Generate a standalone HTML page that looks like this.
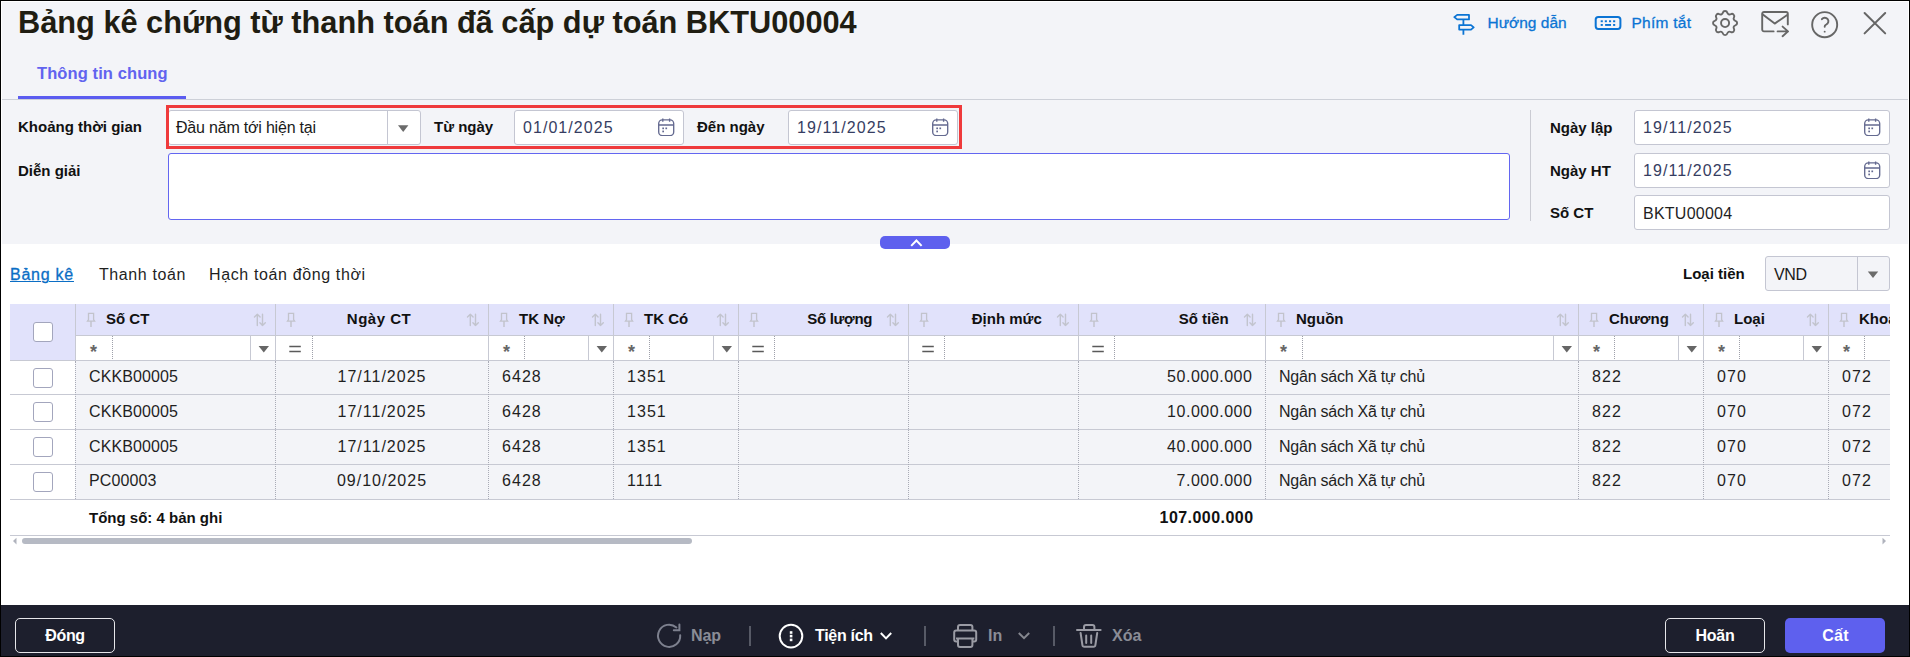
<!DOCTYPE html>
<html><head><meta charset="utf-8"><title>Bảng kê</title><style>
html,body{margin:0;padding:0;width:1910px;height:657px;overflow:hidden;background:#000}
#root{position:absolute;left:0;top:0;width:1910px;height:657px;background:#000;overflow:hidden;font-family:"Liberation Sans", sans-serif}
.a{position:absolute}
.t{position:absolute;white-space:nowrap;font-family:"Liberation Sans", sans-serif;line-height:1}
</style></head><body><div id="root">
<div class="a" style="left:1px;top:1px;width:1908px;height:655px;background:#fff"></div>
<div class="a" style="left:2px;top:2px;width:1906px;height:242px;background:#f3f4f8"></div>
<div class="t" style="left:18px;top:5.91px;font-size:32px;font-weight:bold;color:#1f1d12;transform:scaleX(0.9605);transform-origin:0 0">Bảng kê chứng từ thanh toán đã cấp dự toán BKTU00004</div>
<svg class="a" style="left:1450px;top:10px" width="28" height="28" viewBox="1450 10 28 28" fill="none" stroke="#0b74d4" stroke-width="1.8" stroke-linejoin="round">
<path d="M1457.2 14.9 H1469 V19.4 H1457.2 L1454.3 17.15 Z"/>
<path d="M1459.2 25.1 H1471 L1473.7 27.35 L1471 29.6 H1459.2 Z"/>
<path d="M1463.4 19.4 V25.1 M1463.4 29.6 V34.8"/>
</svg>
<div class="t" style="left:1487.5px;top:15.48px;font-size:15.5px;color:#0b74d4;-webkit-text-stroke:0.3px #0b74d4">Hướng dẫn</div>
<svg class="a" style="left:1590px;top:12px" width="36" height="22" viewBox="1590 12 36 22" fill="none" stroke="#0b74d4" stroke-width="2">
<rect x="1595.7" y="16.9" width="24.7" height="12" rx="2.6"/>
<g fill="#0b74d4" stroke="none">
<rect x="1600.7" y="20.3" width="2.1" height="1.9"/><rect x="1604.8" y="20.3" width="2.1" height="1.9"/><rect x="1609" y="20.3" width="2.1" height="1.9"/><rect x="1613.1" y="20.3" width="2.1" height="1.9"/>
<rect x="1600.7" y="24" width="2.1" height="1.9"/><rect x="1605.1" y="24" width="5.9" height="1.9"/><rect x="1613.1" y="24" width="2.1" height="1.9"/>
</g></svg>
<div class="t" style="left:1631.5px;top:15.48px;font-size:15.5px;letter-spacing:0.25px;color:#0b74d4;-webkit-text-stroke:0.3px #0b74d4">Phím tắt</div>
<svg class="a" style="left:1708.9px;top:7.1px" width="32.16" height="32.16" viewBox="0 0 24 24" fill="none" stroke="#666" stroke-width="1.42" stroke-linecap="round" stroke-linejoin="round">
<path d="M10.325 4.317c.426 -1.756 2.924 -1.756 3.35 0a1.724 1.724 0 0 0 2.573 1.066c1.543 -.94 3.31 .826 2.37 2.37a1.724 1.724 0 0 0 1.065 2.572c1.756 .426 1.756 2.924 0 3.35a1.724 1.724 0 0 0 -1.066 2.573c.94 1.543 -.826 3.31 -2.37 2.37a1.724 1.724 0 0 0 -2.572 1.065c-.426 1.756 -2.924 1.756 -3.35 0a1.724 1.724 0 0 0 -2.573 -1.066c-1.543 .94 -3.31 -.826 -2.37 -2.37a1.724 1.724 0 0 0 -1.065 -2.572c-1.756 -.426 -1.756 -2.924 0 -3.35a1.724 1.724 0 0 0 1.066 -2.573c-.94 -1.543 .826 -3.31 2.37 -2.37c1 .608 2.296 .07 2.572 -1.065z"/>
<path d="M9 12a3 3 0 1 0 6 0a3 3 0 0 0 -6 0"/></svg>
<svg class="a" style="left:1756px;top:6px" width="38" height="36" viewBox="1756 6 38 36" fill="none" stroke="#666" stroke-width="1.9" stroke-linecap="round" stroke-linejoin="round">
<path d="M1773.6 31.4 H1764 a1.8 1.8 0 0 1 -1.8 -1.8 V13.8 a1.8 1.8 0 0 1 1.8 -1.8 H1786 a1.8 1.8 0 0 1 1.8 1.8 V24.4"/>
<path d="M1762.8 14.4 L1774.7 23.6 L1787.2 15"/>
<path d="M1777.6 31.4 H1788 M1782.6 26.6 L1788 31.4 L1782.6 36.2"/>
</svg>
<svg class="a" style="left:1808.1px;top:7.7px" width="33.36" height="33.36" viewBox="0 0 24 24" fill="none" stroke="#666" stroke-width="1.37" stroke-linecap="round" stroke-linejoin="round">
<path d="M3 12a9 9 0 1 0 18 0a9 9 0 1 0 -18 0"/><path d="M12 17l0 .01"/><path d="M12 13.5a1.5 1.5 0 0 1 1 -1.5a2.6 2.6 0 1 0 -3 -4"/></svg>
<svg class="a" style="left:1860px;top:8px" width="30" height="30" viewBox="1860 8 30 30" fill="none" stroke="#666" stroke-width="2" stroke-linecap="round">
<path d="M1864.6 13 L1885.2 33.4 M1885.2 13 L1864.6 33.4"/></svg>
<div class="t" style="left:37px;top:65.03px;font-size:16.5px;font-weight:bold;letter-spacing:0.1px;color:#6163ef;">Thông tin chung</div>
<div class="a" style="left:18px;top:96px;width:168px;height:3px;background:#5b5cf0"></div>
<div class="a" style="left:2px;top:99px;width:1906px;height:1px;background:#cdd0d8"></div>
<div class="t" style="left:18px;top:119.30px;font-size:15px;font-weight:bold;color:#111;">Khoảng thời gian</div>
<div class="t" style="left:18px;top:163.30px;font-size:15px;font-weight:bold;color:#111;">Diễn giải</div>
<div class="a" style="left:168px;top:110px;width:251px;height:33px;background:#fff;border:1px solid #c4c6d2;border-radius:3px"></div>
<div class="a" style="left:387px;top:111px;width:1px;height:33px;background:#c4c6d2"></div>
<svg class="a" style="left:396px;top:124px" width="14" height="10" viewBox="0 0 14 10"><path d="M2 1.2 H12.4 L7.2 7.9 Z" fill="#6b6b6b"/></svg>
<div class="t" style="left:176px;top:120.46px;font-size:16px;letter-spacing:-0.2px;color:#1a1a1a;">Đầu năm tới hiện tại</div>
<div class="a" style="left:166px;top:105px;width:790px;height:38px;border:3px solid #ef3a3c"></div>
<div class="t" style="left:434px;top:119.30px;font-size:15px;font-weight:bold;color:#111;">Từ ngày</div>
<div class="a" style="left:514px;top:110px;width:168px;height:33px;background:#fff;border:1px solid #c4c6d2;border-radius:3px"></div>
<div class="t" style="left:523px;top:120.46px;font-size:16px;letter-spacing:1.05px;color:#363d62;">01/01/2025</div>
<svg class="a" style="left:656px;top:116px" width="20" height="20" viewBox="0 0 20 20" fill="none" stroke="#646a90" stroke-width="1.35">
<rect x="2.7" y="3.8" width="15" height="15.8" rx="3.6"/><path d="M2.7 9 H17.7 M6.8 2.6 V5.8 M13.6 2.6 V5.8"/>
<g fill="#646a90" stroke="none"><rect x="6.3" y="11.5" width="1.7" height="1.7"/><rect x="9.4" y="11.5" width="1.7" height="1.7"/><rect x="6.3" y="14.6" width="1.7" height="1.7"/></g></svg>
<div class="t" style="left:697px;top:119.30px;font-size:15px;font-weight:bold;color:#111;">Đến ngày</div>
<div class="a" style="left:788px;top:110px;width:168px;height:33px;background:#fff;border:1px solid #c4c6d2;border-radius:3px"></div>
<div class="t" style="left:797px;top:120.46px;font-size:16px;letter-spacing:1.08px;color:#363d62;">19/11/2025</div>
<svg class="a" style="left:930px;top:116px" width="20" height="20" viewBox="0 0 20 20" fill="none" stroke="#646a90" stroke-width="1.35">
<rect x="2.7" y="3.8" width="15" height="15.8" rx="3.6"/><path d="M2.7 9 H17.7 M6.8 2.6 V5.8 M13.6 2.6 V5.8"/>
<g fill="#646a90" stroke="none"><rect x="6.3" y="11.5" width="1.7" height="1.7"/><rect x="9.4" y="11.5" width="1.7" height="1.7"/><rect x="6.3" y="14.6" width="1.7" height="1.7"/></g></svg>
<div class="a" style="left:168px;top:153px;width:1340px;height:65px;background:#fff;border:1px solid #6366f1;border-radius:3px"></div>
<div class="a" style="left:1530px;top:110px;width:1px;height:111px;background:#cacbd3"></div>
<div class="t" style="left:1550px;top:120.30px;font-size:15px;font-weight:bold;color:#111;">Ngày lập</div>
<div class="a" style="left:1634px;top:110px;width:254px;height:33px;background:#fff;border:1px solid #c4c6d2;border-radius:3px"></div>
<div class="t" style="left:1643px;top:120.46px;font-size:16px;letter-spacing:1.08px;color:#363d62;">19/11/2025</div>
<svg class="a" style="left:1862px;top:116px" width="20" height="20" viewBox="0 0 20 20" fill="none" stroke="#646a90" stroke-width="1.35">
<rect x="2.7" y="3.8" width="15" height="15.8" rx="3.6"/><path d="M2.7 9 H17.7 M6.8 2.6 V5.8 M13.6 2.6 V5.8"/>
<g fill="#646a90" stroke="none"><rect x="6.3" y="11.5" width="1.7" height="1.7"/><rect x="9.4" y="11.5" width="1.7" height="1.7"/><rect x="6.3" y="14.6" width="1.7" height="1.7"/></g></svg>
<div class="t" style="left:1550px;top:163.30px;font-size:15px;font-weight:bold;color:#111;">Ngày HT</div>
<div class="a" style="left:1634px;top:153px;width:254px;height:33px;background:#fff;border:1px solid #c4c6d2;border-radius:3px"></div>
<div class="t" style="left:1643px;top:163.46px;font-size:16px;letter-spacing:1.08px;color:#363d62;">19/11/2025</div>
<svg class="a" style="left:1862px;top:159px" width="20" height="20" viewBox="0 0 20 20" fill="none" stroke="#646a90" stroke-width="1.35">
<rect x="2.7" y="3.8" width="15" height="15.8" rx="3.6"/><path d="M2.7 9 H17.7 M6.8 2.6 V5.8 M13.6 2.6 V5.8"/>
<g fill="#646a90" stroke="none"><rect x="6.3" y="11.5" width="1.7" height="1.7"/><rect x="9.4" y="11.5" width="1.7" height="1.7"/><rect x="6.3" y="14.6" width="1.7" height="1.7"/></g></svg>
<div class="t" style="left:1550px;top:205.30px;font-size:15px;font-weight:bold;color:#111;">Số CT</div>
<div class="a" style="left:1634px;top:195px;width:254px;height:33px;background:#fff;border:1px solid #c4c6d2;border-radius:3px"></div>
<div class="t" style="left:1643px;top:205.66px;font-size:16px;letter-spacing:0.25px;color:#1f1f1f;">BKTU00004</div>
<div class="a" style="left:880px;top:236px;width:70px;height:13px;background:#5e60ee;border-radius:5px"></div>
<svg class="a" style="left:905px;top:235px" width="22" height="14" viewBox="905 235 22 14"><path d="M911.2 245.9 L916.4 240.5 L921.6 245.9" fill="none" stroke="#fff" stroke-width="2"/></svg>
<div class="t" style="left:10px;top:266.96px;font-size:16px;letter-spacing:0.75px;color:#0b6ec5;text-decoration:underline;text-underline-offset:1px;text-decoration-thickness:1.4px;-webkit-text-stroke:0.3px #0b6ec5">Bảng kê</div>
<div class="t" style="left:99px;top:266.96px;font-size:16px;letter-spacing:0.6px;color:#1f1f1f;">Thanh toán</div>
<div class="t" style="left:209px;top:266.96px;font-size:16px;letter-spacing:0.63px;color:#1f1f1f;">Hạch toán đồng thời</div>
<div class="t" style="left:1683px;top:266.30px;font-size:15px;font-weight:bold;color:#111;">Loại tiền</div>
<div class="a" style="left:1765px;top:256px;width:123px;height:33px;background:#f3f4f8;border:1px solid #c4c6d2;border-radius:3px"></div>
<div class="a" style="left:1857px;top:257px;width:1px;height:33px;background:#c4c6d2"></div>
<svg class="a" style="left:1866px;top:270px" width="14" height="10" viewBox="0 0 14 10"><path d="M1.8 1.4 H12.2 L7 8 Z" fill="#6b6b6b"/></svg>
<div class="t" style="left:1774px;top:266.76px;font-size:16px;letter-spacing:-0.4px;color:#1a1a1a;">VND</div>
<div class="a" style="left:10px;top:304px;width:1880px;height:232px;overflow:hidden">
<div class="a" style="left:0px;top:0px;width:1880px;height:31px;background:#e1e2fb"></div>
<div class="a" style="left:0px;top:31px;width:65px;height:25px;background:#e1e2fb"></div>
<div class="a" style="left:65px;top:31px;width:1815px;height:25px;background:#fff"></div>
<div class="a" style="left:65px;top:31px;width:1815px;height:1px;background:#c7c9d3"></div>
<div class="a" style="left:0px;top:56px;width:1880px;height:1px;background:#c7c9d3"></div>
<div class="a" style="left:65px;top:57px;width:1815px;height:33px;background:#f3f4f8"></div>
<div class="a" style="left:65px;top:91px;width:1815px;height:34px;background:#f3f4f8"></div>
<div class="a" style="left:65px;top:126px;width:1815px;height:34px;background:#f3f4f8"></div>
<div class="a" style="left:65px;top:161px;width:1815px;height:34px;background:#f3f4f8"></div>
<div class="a" style="left:0px;top:90px;width:1880px;height:1px;background:#c7c9d3"></div>
<div class="a" style="left:0px;top:125px;width:1880px;height:1px;background:#c7c9d3"></div>
<div class="a" style="left:0px;top:160px;width:1880px;height:1px;background:#c7c9d3"></div>
<div class="a" style="left:0px;top:195px;width:1880px;height:1px;background:#c7c9d3"></div>
<div class="a" style="left:0px;top:231px;width:1880px;height:1px;background:#c7c9d3"></div>
<div class="a" style="left:23px;top:18px;width:20px;height:20px;background:#fff;border:1px solid #a3a6bd;border-radius:3px;box-sizing:border-box"></div>
<div class="a" style="left:23px;top:64px;width:20px;height:20px;background:#fff;border:1px solid #a3a6bd;border-radius:3px;box-sizing:border-box"></div>
<div class="a" style="left:23px;top:98px;width:20px;height:20px;background:#fff;border:1px solid #a3a6bd;border-radius:3px;box-sizing:border-box"></div>
<div class="a" style="left:23px;top:133px;width:20px;height:20px;background:#fff;border:1px solid #a3a6bd;border-radius:3px;box-sizing:border-box"></div>
<div class="a" style="left:23px;top:168px;width:20px;height:20px;background:#fff;border:1px solid #a3a6bd;border-radius:3px;box-sizing:border-box"></div>
<div class="a" style="left:65px;top:0px;width:1px;height:56px;background:#c7c9d3"></div>
<svg class="a" style="left:75px;top:8px" width="12" height="16" viewBox="0 0 12 16" fill="none" stroke="#c2c3cc" stroke-width="1.3"><path d="M3.5 1.4 H8.6 V7.6 L9.6 9.1 H2.5 L3.5 7.6 Z"/><path d="M6 9.1 V14.9" stroke-width="1.5"/></svg>
<div class="t" style="left:96px;top:7.30px;font-size:15px;font-weight:bold;color:#111;">Số CT</div>
<svg class="a" style="left:243px;top:9px" width="14" height="14" viewBox="0 0 14 14" fill="none" stroke="#c2c4ce" stroke-width="1.4" stroke-linecap="round" stroke-linejoin="round"><path d="M4.3 1.2 V12.6 M1.5 4 L4.3 1.2 L7.1 4"/><path d="M9.5 1.2 V12.6 M6.9 9.8 L9.5 12.6 L12.3 9.8"/></svg>
<div class="t" style="left:80px;top:38.5px;font-size:18px;font-weight:bold;color:#666">*</div>
<div class="a" style="left:102px;top:32px;width:1px;height:23px;border-left:1px dotted #9ea0aa;box-sizing:border-box"></div>
<div class="a" style="left:240px;top:32px;width:1px;height:24px;background:#c7c9d3"></div>
<svg class="a" style="left:248px;top:41px" width="12" height="9" viewBox="0 0 12 9"><path d="M0.6 1 H11 L5.8 7.6 Z" fill="#666"/></svg>
<div class="a" style="left:65px;top:57px;width:1px;height:138px;border-left:1px dotted #a9abb6;box-sizing:border-box"></div>
<div class="a" style="left:265px;top:0px;width:1px;height:56px;background:#c7c9d3"></div>
<svg class="a" style="left:275px;top:8px" width="12" height="16" viewBox="0 0 12 16" fill="none" stroke="#c2c3cc" stroke-width="1.3"><path d="M3.5 1.4 H8.6 V7.6 L9.6 9.1 H2.5 L3.5 7.6 Z"/><path d="M6 9.1 V14.9" stroke-width="1.5"/></svg>
<div class="t" style="left:69.0px;width:600px;text-align:center;top:7.30px;font-size:15px;font-weight:bold;letter-spacing:0.5px;color:#111;">Ngày CT</div>
<svg class="a" style="left:456px;top:9px" width="14" height="14" viewBox="0 0 14 14" fill="none" stroke="#c2c4ce" stroke-width="1.4" stroke-linecap="round" stroke-linejoin="round"><path d="M4.3 1.2 V12.6 M1.5 4 L4.3 1.2 L7.1 4"/><path d="M9.5 1.2 V12.6 M6.9 9.8 L9.5 12.6 L12.3 9.8"/></svg>
<svg class="a" style="left:279px;top:41px" width="14" height="9" viewBox="0 0 14 9"><path d="M0.3 1.6 H11.8 M0.3 6.6 H11.8" stroke="#5a5a5a" stroke-width="1.5"/></svg>
<div class="a" style="left:302px;top:32px;width:1px;height:23px;border-left:1px dotted #9ea0aa;box-sizing:border-box"></div>
<div class="a" style="left:265px;top:57px;width:1px;height:138px;border-left:1px dotted #a9abb6;box-sizing:border-box"></div>
<div class="a" style="left:478px;top:0px;width:1px;height:56px;background:#c7c9d3"></div>
<svg class="a" style="left:488px;top:8px" width="12" height="16" viewBox="0 0 12 16" fill="none" stroke="#c2c3cc" stroke-width="1.3"><path d="M3.5 1.4 H8.6 V7.6 L9.6 9.1 H2.5 L3.5 7.6 Z"/><path d="M6 9.1 V14.9" stroke-width="1.5"/></svg>
<div class="t" style="left:509px;top:7.30px;font-size:15px;font-weight:bold;color:#111;">TK Nợ</div>
<svg class="a" style="left:581px;top:9px" width="14" height="14" viewBox="0 0 14 14" fill="none" stroke="#c2c4ce" stroke-width="1.4" stroke-linecap="round" stroke-linejoin="round"><path d="M4.3 1.2 V12.6 M1.5 4 L4.3 1.2 L7.1 4"/><path d="M9.5 1.2 V12.6 M6.9 9.8 L9.5 12.6 L12.3 9.8"/></svg>
<div class="t" style="left:493px;top:38.5px;font-size:18px;font-weight:bold;color:#666">*</div>
<div class="a" style="left:514px;top:32px;width:1px;height:23px;border-left:1px dotted #9ea0aa;box-sizing:border-box"></div>
<div class="a" style="left:578px;top:32px;width:1px;height:24px;background:#c7c9d3"></div>
<svg class="a" style="left:586px;top:41px" width="12" height="9" viewBox="0 0 12 9"><path d="M0.6 1 H11 L5.8 7.6 Z" fill="#666"/></svg>
<div class="a" style="left:478px;top:57px;width:1px;height:138px;border-left:1px dotted #a9abb6;box-sizing:border-box"></div>
<div class="a" style="left:603px;top:0px;width:1px;height:56px;background:#c7c9d3"></div>
<svg class="a" style="left:613px;top:8px" width="12" height="16" viewBox="0 0 12 16" fill="none" stroke="#c2c3cc" stroke-width="1.3"><path d="M3.5 1.4 H8.6 V7.6 L9.6 9.1 H2.5 L3.5 7.6 Z"/><path d="M6 9.1 V14.9" stroke-width="1.5"/></svg>
<div class="t" style="left:634px;top:7.30px;font-size:15px;font-weight:bold;color:#111;">TK Có</div>
<svg class="a" style="left:706px;top:9px" width="14" height="14" viewBox="0 0 14 14" fill="none" stroke="#c2c4ce" stroke-width="1.4" stroke-linecap="round" stroke-linejoin="round"><path d="M4.3 1.2 V12.6 M1.5 4 L4.3 1.2 L7.1 4"/><path d="M9.5 1.2 V12.6 M6.9 9.8 L9.5 12.6 L12.3 9.8"/></svg>
<div class="t" style="left:618px;top:38.5px;font-size:18px;font-weight:bold;color:#666">*</div>
<div class="a" style="left:639px;top:32px;width:1px;height:23px;border-left:1px dotted #9ea0aa;box-sizing:border-box"></div>
<div class="a" style="left:703px;top:32px;width:1px;height:24px;background:#c7c9d3"></div>
<svg class="a" style="left:711px;top:41px" width="12" height="9" viewBox="0 0 12 9"><path d="M0.6 1 H11 L5.8 7.6 Z" fill="#666"/></svg>
<div class="a" style="left:603px;top:57px;width:1px;height:138px;border-left:1px dotted #a9abb6;box-sizing:border-box"></div>
<div class="a" style="left:728px;top:0px;width:1px;height:56px;background:#c7c9d3"></div>
<svg class="a" style="left:738px;top:8px" width="12" height="16" viewBox="0 0 12 16" fill="none" stroke="#c2c3cc" stroke-width="1.3"><path d="M3.5 1.4 H8.6 V7.6 L9.6 9.1 H2.5 L3.5 7.6 Z"/><path d="M6 9.1 V14.9" stroke-width="1.5"/></svg>
<div class="t" style="left:262.20000000000005px;width:600px;text-align:right;top:7.30px;font-size:15px;font-weight:bold;letter-spacing:-0.3px;color:#111;">Số lượng</div>
<svg class="a" style="left:876px;top:9px" width="14" height="14" viewBox="0 0 14 14" fill="none" stroke="#c2c4ce" stroke-width="1.4" stroke-linecap="round" stroke-linejoin="round"><path d="M4.3 1.2 V12.6 M1.5 4 L4.3 1.2 L7.1 4"/><path d="M9.5 1.2 V12.6 M6.9 9.8 L9.5 12.6 L12.3 9.8"/></svg>
<svg class="a" style="left:742px;top:41px" width="14" height="9" viewBox="0 0 14 9"><path d="M0.3 1.6 H11.8 M0.3 6.6 H11.8" stroke="#5a5a5a" stroke-width="1.5"/></svg>
<div class="a" style="left:764px;top:32px;width:1px;height:23px;border-left:1px dotted #9ea0aa;box-sizing:border-box"></div>
<div class="a" style="left:728px;top:57px;width:1px;height:138px;border-left:1px dotted #a9abb6;box-sizing:border-box"></div>
<div class="a" style="left:898px;top:0px;width:1px;height:56px;background:#c7c9d3"></div>
<svg class="a" style="left:908px;top:8px" width="12" height="16" viewBox="0 0 12 16" fill="none" stroke="#c2c3cc" stroke-width="1.3"><path d="M3.5 1.4 H8.6 V7.6 L9.6 9.1 H2.5 L3.5 7.6 Z"/><path d="M6 9.1 V14.9" stroke-width="1.5"/></svg>
<div class="t" style="left:431.79999999999995px;width:600px;text-align:right;top:7.30px;font-size:15px;font-weight:bold;color:#111;">Định mức</div>
<svg class="a" style="left:1046px;top:9px" width="14" height="14" viewBox="0 0 14 14" fill="none" stroke="#c2c4ce" stroke-width="1.4" stroke-linecap="round" stroke-linejoin="round"><path d="M4.3 1.2 V12.6 M1.5 4 L4.3 1.2 L7.1 4"/><path d="M9.5 1.2 V12.6 M6.9 9.8 L9.5 12.6 L12.3 9.8"/></svg>
<svg class="a" style="left:912px;top:41px" width="14" height="9" viewBox="0 0 14 9"><path d="M0.3 1.6 H11.8 M0.3 6.6 H11.8" stroke="#5a5a5a" stroke-width="1.5"/></svg>
<div class="a" style="left:934px;top:32px;width:1px;height:23px;border-left:1px dotted #9ea0aa;box-sizing:border-box"></div>
<div class="a" style="left:898px;top:57px;width:1px;height:138px;border-left:1px dotted #a9abb6;box-sizing:border-box"></div>
<div class="a" style="left:1068px;top:0px;width:1px;height:56px;background:#c7c9d3"></div>
<svg class="a" style="left:1078px;top:8px" width="12" height="16" viewBox="0 0 12 16" fill="none" stroke="#c2c3cc" stroke-width="1.3"><path d="M3.5 1.4 H8.6 V7.6 L9.6 9.1 H2.5 L3.5 7.6 Z"/><path d="M6 9.1 V14.9" stroke-width="1.5"/></svg>
<div class="t" style="left:618.8px;width:600px;text-align:right;top:7.30px;font-size:15px;font-weight:bold;color:#111;">Số tiền</div>
<svg class="a" style="left:1233px;top:9px" width="14" height="14" viewBox="0 0 14 14" fill="none" stroke="#c2c4ce" stroke-width="1.4" stroke-linecap="round" stroke-linejoin="round"><path d="M4.3 1.2 V12.6 M1.5 4 L4.3 1.2 L7.1 4"/><path d="M9.5 1.2 V12.6 M6.9 9.8 L9.5 12.6 L12.3 9.8"/></svg>
<svg class="a" style="left:1082px;top:41px" width="14" height="9" viewBox="0 0 14 9"><path d="M0.3 1.6 H11.8 M0.3 6.6 H11.8" stroke="#5a5a5a" stroke-width="1.5"/></svg>
<div class="a" style="left:1104px;top:32px;width:1px;height:23px;border-left:1px dotted #9ea0aa;box-sizing:border-box"></div>
<div class="a" style="left:1068px;top:57px;width:1px;height:138px;border-left:1px dotted #a9abb6;box-sizing:border-box"></div>
<div class="a" style="left:1255px;top:0px;width:1px;height:56px;background:#c7c9d3"></div>
<svg class="a" style="left:1265px;top:8px" width="12" height="16" viewBox="0 0 12 16" fill="none" stroke="#c2c3cc" stroke-width="1.3"><path d="M3.5 1.4 H8.6 V7.6 L9.6 9.1 H2.5 L3.5 7.6 Z"/><path d="M6 9.1 V14.9" stroke-width="1.5"/></svg>
<div class="t" style="left:1286px;top:7.30px;font-size:15px;font-weight:bold;color:#111;">Nguồn</div>
<svg class="a" style="left:1546px;top:9px" width="14" height="14" viewBox="0 0 14 14" fill="none" stroke="#c2c4ce" stroke-width="1.4" stroke-linecap="round" stroke-linejoin="round"><path d="M4.3 1.2 V12.6 M1.5 4 L4.3 1.2 L7.1 4"/><path d="M9.5 1.2 V12.6 M6.9 9.8 L9.5 12.6 L12.3 9.8"/></svg>
<div class="t" style="left:1270px;top:38.5px;font-size:18px;font-weight:bold;color:#666">*</div>
<div class="a" style="left:1292px;top:32px;width:1px;height:23px;border-left:1px dotted #9ea0aa;box-sizing:border-box"></div>
<div class="a" style="left:1543px;top:32px;width:1px;height:24px;background:#c7c9d3"></div>
<svg class="a" style="left:1551px;top:41px" width="12" height="9" viewBox="0 0 12 9"><path d="M0.6 1 H11 L5.8 7.6 Z" fill="#666"/></svg>
<div class="a" style="left:1255px;top:57px;width:1px;height:138px;border-left:1px dotted #a9abb6;box-sizing:border-box"></div>
<div class="a" style="left:1568px;top:0px;width:1px;height:56px;background:#c7c9d3"></div>
<svg class="a" style="left:1578px;top:8px" width="12" height="16" viewBox="0 0 12 16" fill="none" stroke="#c2c3cc" stroke-width="1.3"><path d="M3.5 1.4 H8.6 V7.6 L9.6 9.1 H2.5 L3.5 7.6 Z"/><path d="M6 9.1 V14.9" stroke-width="1.5"/></svg>
<div class="t" style="left:1599px;top:7.30px;font-size:15px;font-weight:bold;color:#111;">Chương</div>
<svg class="a" style="left:1671px;top:9px" width="14" height="14" viewBox="0 0 14 14" fill="none" stroke="#c2c4ce" stroke-width="1.4" stroke-linecap="round" stroke-linejoin="round"><path d="M4.3 1.2 V12.6 M1.5 4 L4.3 1.2 L7.1 4"/><path d="M9.5 1.2 V12.6 M6.9 9.8 L9.5 12.6 L12.3 9.8"/></svg>
<div class="t" style="left:1583px;top:38.5px;font-size:18px;font-weight:bold;color:#666">*</div>
<div class="a" style="left:1604px;top:32px;width:1px;height:23px;border-left:1px dotted #9ea0aa;box-sizing:border-box"></div>
<div class="a" style="left:1668px;top:32px;width:1px;height:24px;background:#c7c9d3"></div>
<svg class="a" style="left:1676px;top:41px" width="12" height="9" viewBox="0 0 12 9"><path d="M0.6 1 H11 L5.8 7.6 Z" fill="#666"/></svg>
<div class="a" style="left:1568px;top:57px;width:1px;height:138px;border-left:1px dotted #a9abb6;box-sizing:border-box"></div>
<div class="a" style="left:1693px;top:0px;width:1px;height:56px;background:#c7c9d3"></div>
<svg class="a" style="left:1703px;top:8px" width="12" height="16" viewBox="0 0 12 16" fill="none" stroke="#c2c3cc" stroke-width="1.3"><path d="M3.5 1.4 H8.6 V7.6 L9.6 9.1 H2.5 L3.5 7.6 Z"/><path d="M6 9.1 V14.9" stroke-width="1.5"/></svg>
<div class="t" style="left:1724px;top:7.30px;font-size:15px;font-weight:bold;color:#111;">Loại</div>
<svg class="a" style="left:1796px;top:9px" width="14" height="14" viewBox="0 0 14 14" fill="none" stroke="#c2c4ce" stroke-width="1.4" stroke-linecap="round" stroke-linejoin="round"><path d="M4.3 1.2 V12.6 M1.5 4 L4.3 1.2 L7.1 4"/><path d="M9.5 1.2 V12.6 M6.9 9.8 L9.5 12.6 L12.3 9.8"/></svg>
<div class="t" style="left:1708px;top:38.5px;font-size:18px;font-weight:bold;color:#666">*</div>
<div class="a" style="left:1729px;top:32px;width:1px;height:23px;border-left:1px dotted #9ea0aa;box-sizing:border-box"></div>
<div class="a" style="left:1793px;top:32px;width:1px;height:24px;background:#c7c9d3"></div>
<svg class="a" style="left:1801px;top:41px" width="12" height="9" viewBox="0 0 12 9"><path d="M0.6 1 H11 L5.8 7.6 Z" fill="#666"/></svg>
<div class="a" style="left:1693px;top:57px;width:1px;height:138px;border-left:1px dotted #a9abb6;box-sizing:border-box"></div>
<div class="a" style="left:1818px;top:0px;width:1px;height:56px;background:#c7c9d3"></div>
<svg class="a" style="left:1828px;top:8px" width="12" height="16" viewBox="0 0 12 16" fill="none" stroke="#c2c3cc" stroke-width="1.3"><path d="M3.5 1.4 H8.6 V7.6 L9.6 9.1 H2.5 L3.5 7.6 Z"/><path d="M6 9.1 V14.9" stroke-width="1.5"/></svg>
<div class="t" style="left:1849px;top:7.30px;font-size:15px;font-weight:bold;color:#111;">Khoản</div>
<div class="t" style="left:1833px;top:38.5px;font-size:18px;font-weight:bold;color:#666">*</div>
<div class="a" style="left:1854px;top:32px;width:1px;height:23px;border-left:1px dotted #9ea0aa;box-sizing:border-box"></div>
<div class="a" style="left:1818px;top:57px;width:1px;height:138px;border-left:1px dotted #a9abb6;box-sizing:border-box"></div>
<div class="t" style="left:79px;top:64.96px;font-size:16px;letter-spacing:0.12px;color:#1f1f1f;">CKKB00005</div>
<div class="t" style="left:72.0px;width:600px;text-align:center;top:64.96px;font-size:16px;letter-spacing:1.0px;color:#1f1f1f;">17/11/2025</div>
<div class="t" style="left:492px;top:64.96px;font-size:16px;letter-spacing:1.05px;color:#1f1f1f;">6428</div>
<div class="t" style="left:617px;top:64.96px;font-size:16px;letter-spacing:1.05px;color:#1f1f1f;">1351</div>
<div class="t" style="left:642.5px;width:600px;text-align:right;top:64.96px;font-size:16px;letter-spacing:0.54px;color:#1f1f1f;">50.000.000</div>
<div class="t" style="left:1269px;top:64.96px;font-size:16px;letter-spacing:-0.24px;color:#1f1f1f;">Ngân sách Xã tự chủ</div>
<div class="t" style="left:1582px;top:64.96px;font-size:16px;letter-spacing:1.05px;color:#1f1f1f;">822</div>
<div class="t" style="left:1707px;top:64.96px;font-size:16px;letter-spacing:1.05px;color:#1f1f1f;">070</div>
<div class="t" style="left:1832px;top:64.96px;font-size:16px;letter-spacing:1.05px;color:#1f1f1f;">072</div>
<div class="t" style="left:79px;top:99.96px;font-size:16px;letter-spacing:0.12px;color:#1f1f1f;">CKKB00005</div>
<div class="t" style="left:72.0px;width:600px;text-align:center;top:99.96px;font-size:16px;letter-spacing:1.0px;color:#1f1f1f;">17/11/2025</div>
<div class="t" style="left:492px;top:99.96px;font-size:16px;letter-spacing:1.05px;color:#1f1f1f;">6428</div>
<div class="t" style="left:617px;top:99.96px;font-size:16px;letter-spacing:1.05px;color:#1f1f1f;">1351</div>
<div class="t" style="left:642.5px;width:600px;text-align:right;top:99.96px;font-size:16px;letter-spacing:0.54px;color:#1f1f1f;">10.000.000</div>
<div class="t" style="left:1269px;top:99.96px;font-size:16px;letter-spacing:-0.24px;color:#1f1f1f;">Ngân sách Xã tự chủ</div>
<div class="t" style="left:1582px;top:99.96px;font-size:16px;letter-spacing:1.05px;color:#1f1f1f;">822</div>
<div class="t" style="left:1707px;top:99.96px;font-size:16px;letter-spacing:1.05px;color:#1f1f1f;">070</div>
<div class="t" style="left:1832px;top:99.96px;font-size:16px;letter-spacing:1.05px;color:#1f1f1f;">072</div>
<div class="t" style="left:79px;top:134.96px;font-size:16px;letter-spacing:0.12px;color:#1f1f1f;">CKKB00005</div>
<div class="t" style="left:72.0px;width:600px;text-align:center;top:134.96px;font-size:16px;letter-spacing:1.0px;color:#1f1f1f;">17/11/2025</div>
<div class="t" style="left:492px;top:134.96px;font-size:16px;letter-spacing:1.05px;color:#1f1f1f;">6428</div>
<div class="t" style="left:617px;top:134.96px;font-size:16px;letter-spacing:1.05px;color:#1f1f1f;">1351</div>
<div class="t" style="left:642.5px;width:600px;text-align:right;top:134.96px;font-size:16px;letter-spacing:0.54px;color:#1f1f1f;">40.000.000</div>
<div class="t" style="left:1269px;top:134.96px;font-size:16px;letter-spacing:-0.24px;color:#1f1f1f;">Ngân sách Xã tự chủ</div>
<div class="t" style="left:1582px;top:134.96px;font-size:16px;letter-spacing:1.05px;color:#1f1f1f;">822</div>
<div class="t" style="left:1707px;top:134.96px;font-size:16px;letter-spacing:1.05px;color:#1f1f1f;">070</div>
<div class="t" style="left:1832px;top:134.96px;font-size:16px;letter-spacing:1.05px;color:#1f1f1f;">072</div>
<div class="t" style="left:79px;top:169.46px;font-size:16px;letter-spacing:0.12px;color:#1f1f1f;">PC00003</div>
<div class="t" style="left:72.0px;width:600px;text-align:center;top:169.46px;font-size:16px;letter-spacing:1.0px;color:#1f1f1f;">09/10/2025</div>
<div class="t" style="left:492px;top:169.46px;font-size:16px;letter-spacing:1.05px;color:#1f1f1f;">6428</div>
<div class="t" style="left:617px;top:169.46px;font-size:16px;letter-spacing:1.05px;color:#1f1f1f;">1111</div>
<div class="t" style="left:642.5px;width:600px;text-align:right;top:169.46px;font-size:16px;letter-spacing:0.54px;color:#1f1f1f;">7.000.000</div>
<div class="t" style="left:1269px;top:169.46px;font-size:16px;letter-spacing:-0.24px;color:#1f1f1f;">Ngân sách Xã tự chủ</div>
<div class="t" style="left:1582px;top:169.46px;font-size:16px;letter-spacing:1.05px;color:#1f1f1f;">822</div>
<div class="t" style="left:1707px;top:169.46px;font-size:16px;letter-spacing:1.05px;color:#1f1f1f;">070</div>
<div class="t" style="left:1832px;top:169.46px;font-size:16px;letter-spacing:1.05px;color:#1f1f1f;">072</div>
<div class="t" style="left:79px;top:206.10px;font-size:15px;font-weight:bold;color:#111;">Tổng số: 4 bản ghi</div>
<div class="t" style="left:643.5px;width:600px;text-align:right;top:205.96px;font-size:16px;font-weight:bold;letter-spacing:0.45px;color:#111;">107.000.000</div>
</div>
<div class="a" style="left:22px;top:538px;width:670px;height:6px;background:#b6bac4;border-radius:3px"></div>
<svg class="a" style="left:11px;top:536px" width="8" height="10" viewBox="0 0 8 10"><path d="M5.5 1.8 V8.4 L2 5.1 Z" fill="#b0b3bd"/></svg>
<svg class="a" style="left:1880px;top:536px" width="8" height="10" viewBox="0 0 8 10"><path d="M2.5 1.8 V8.4 L6 5.1 Z" fill="#b0b3bd"/></svg>
<div class="a" style="left:1px;top:605px;width:1908px;height:51px;background:#1d1f2d"></div>
<div class="a" style="left:15px;top:618px;width:100px;height:35px;border:1.5px solid #e6e6ea;border-radius:5px;box-sizing:border-box"></div>
<div class="t" style="left:-235px;width:600px;text-align:center;top:627.96px;font-size:16px;font-weight:bold;letter-spacing:-0.4px;color:#fff;">Đóng</div>
<svg class="a" style="left:652px;top:618px" width="34" height="34" viewBox="652 618 34 34" fill="none" stroke="#7d808e" stroke-width="2" stroke-linecap="round">
<path d="M680.2 635.2 A11.1 11.1 0 1 1 676.4 627.4"/><path d="M679.4 624.6 V630.2 H673.8"/></svg>
<div class="t" style="left:691px;top:627.96px;font-size:16px;font-weight:bold;letter-spacing:-0.1px;color:#8a8c96;">Nạp</div>
<div class="a" style="left:749px;top:626px;width:2px;height:20px;background:#575a66"></div>
<svg class="a" style="left:774px;top:618px" width="34" height="34" viewBox="774 618 34 34" fill="none" stroke="#fff" stroke-width="2">
<circle cx="791" cy="636.1" r="11.3"/><g fill="#fff" stroke="none"><rect x="789.8" y="631.2" width="2.6" height="2.6"/><rect x="789.8" y="634.8" width="2.6" height="2.6"/><rect x="789.8" y="638.6" width="2.6" height="2.6"/></g></svg>
<div class="t" style="left:815px;top:627.96px;font-size:16px;font-weight:bold;letter-spacing:-0.3px;color:#fff;">Tiện ích</div>
<svg class="a" style="left:876px;top:628px" width="20" height="14" viewBox="876 628 20 14"><path d="M880.8 633 L886 638.4 L891.2 633" fill="none" stroke="#fff" stroke-width="2"/></svg>
<div class="a" style="left:924px;top:626px;width:2px;height:20px;background:#575a66"></div>
<svg class="a" style="left:948px;top:618px" width="34" height="34" viewBox="948 618 34 34" fill="none" stroke="#9a9ba4" stroke-width="2" stroke-linejoin="round">
<path d="M958 630.4 V627 a2 2 0 0 1 2 -2 H970.4 a2 2 0 0 1 2 2 V630.4"/>
<path d="M958 641.4 H956.2 a2 2 0 0 1 -2 -2 V632.4 a2 2 0 0 1 2 -2 H974.2 a2 2 0 0 1 2 2 V639.4 a2 2 0 0 1 -2 2 H972.4"/>
<path d="M956 638.6 H974.4 M958 638.6 V645 a2 2 0 0 0 2 2 H970.4 a2 2 0 0 0 2 -2 V638.6"/></svg>
<div class="t" style="left:988px;top:627.96px;font-size:16px;font-weight:bold;color:#8a8c96;">In</div>
<svg class="a" style="left:1014px;top:628px" width="20" height="14" viewBox="1014 628 20 14"><path d="M1018.8 633 L1024 638.2 L1029.2 633" fill="none" stroke="#85878f" stroke-width="2"/></svg>
<div class="a" style="left:1053px;top:626px;width:2px;height:20px;background:#575a66"></div>
<svg class="a" style="left:1072px;top:618px" width="34" height="34" viewBox="1072 618 34 34" fill="none" stroke="#9a9ba4" stroke-width="2" stroke-linecap="round" stroke-linejoin="round">
<path d="M1077 630 H1100.6"/><path d="M1084 629.6 V627 a2 2 0 0 1 2 -2 H1092.4 a2 2 0 0 1 2 2 V629.6"/>
<path d="M1080.6 633 L1082.4 645 a2 2 0 0 0 2 1.8 H1093.4 a2 2 0 0 0 2 -1.8 L1097.2 633"/>
<path d="M1086.2 635.6 V643 M1091.2 635.6 V643"/></svg>
<div class="t" style="left:1112px;top:627.96px;font-size:16px;font-weight:bold;color:#8a8c96;">Xóa</div>
<div class="a" style="left:1665px;top:618px;width:100px;height:35px;border:1.5px solid #e6e6ea;border-radius:5px;box-sizing:border-box"></div>
<div class="t" style="left:1415px;width:600px;text-align:center;top:627.96px;font-size:16px;font-weight:bold;letter-spacing:-0.2px;color:#fff;">Hoãn</div>
<div class="a" style="left:1785px;top:618px;width:100px;height:35px;background:#5e60ee;border-radius:5px"></div>
<div class="t" style="left:1535.5px;width:600px;text-align:center;top:627.96px;font-size:16px;font-weight:bold;letter-spacing:0.2px;color:#fff;">Cất</div>
</div></body></html>
